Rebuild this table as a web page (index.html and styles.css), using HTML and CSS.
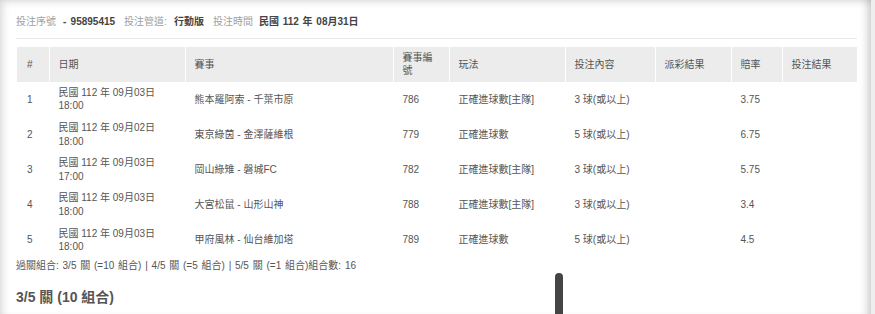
FILE: index.html
```html
<!DOCTYPE html>
<html lang="zh-Hant">
<head>
<meta charset="utf-8">
<title>投注明細</title>
<link rel="stylesheet" href="styles.css">
</head>
<body>
<div class="page">
  <div class="info"><span class="lbl">投注序號</span><b class="val v1">- 95895415</b><span class="lbl l2">投注管道:</span><b class="val v2">行動版</b><span class="lbl l3">投注時間</span><b class="val v3">民國 112 年 08月31日</b></div>
  <div class="sep"></div>
  <table class="bets">
    <colgroup>
      <col class="c1"><col class="c2"><col class="c3"><col class="c4"><col class="c5"><col class="c6"><col class="c7"><col class="c8"><col class="c9">
    </colgroup>
    <thead>
      <tr><th>#</th><th>日期</th><th>賽事</th><th>賽事編號</th><th>玩法</th><th>投注內容</th><th>派彩結果</th><th>賠率</th><th>投注結果</th></tr>
    </thead>
    <tbody>
      <tr><td>1</td><td>民國 112 年 09月03日<br>18:00</td><td>熊本羅阿索 - 千葉市原</td><td>786</td><td>正確進球數[主隊]</td><td>3 球(或以上)</td><td></td><td>3.75</td><td></td></tr>
      <tr><td>2</td><td>民國 112 年 09月02日<br>18:00</td><td>東京綠茵 - 金澤薩維根</td><td>779</td><td>正確進球數</td><td>5 球(或以上)</td><td></td><td>6.75</td><td></td></tr>
      <tr><td>3</td><td>民國 112 年 09月03日<br>17:00</td><td>岡山綠雉 - 磐城FC</td><td>782</td><td>正確進球數[主隊]</td><td>3 球(或以上)</td><td></td><td>5.75</td><td></td></tr>
      <tr><td>4</td><td>民國 112 年 09月03日<br>18:00</td><td>大宮松鼠 - 山形山神</td><td>788</td><td>正確進球數[主隊]</td><td>3 球(或以上)</td><td></td><td>3.4</td><td></td></tr>
      <tr><td>5</td><td>民國 112 年 09月03日<br>18:00</td><td>甲府風林 - 仙台維加塔</td><td>789</td><td>正確進球數</td><td>5 球(或以上)</td><td></td><td>4.5</td><td></td></tr>
    </tbody>
  </table>
  <p class="summary">過關組合: 3/5 關 (=10 組合) | 4/5 關 (=5 組合) | 5/5 關 (=1 組合)組合數: 16</p>
  <h3 class="combo">3/5 關 (10 組合)</h3>
  <div class="thumb"></div>
</div>
</body>
</html>
```

FILE: styles.css
```css
html, body {
  margin: 0;
  padding: 0;
  background: #eeeeee;
  height: 314px;
  overflow: hidden;
}

body {
  font-family: "Liberation Sans", Arial, "Noto Sans CJK TC", sans-serif;
  font-size: 10px;
  color: #555;
}

.page {
  position: relative;
  width: 871px;
  height: 314px;
  overflow: hidden;
  box-sizing: border-box;
  background: #fff;
  padding: 15px 14px 0 16px;
  box-shadow: inset 8px 7px 8px -6px rgba(0, 0, 0, 0.16),
              inset -9px 0 9px -6px rgba(0, 0, 0, 0.22);
}

.info {
  line-height: 14px;
  white-space: nowrap;
}

.lbl {
  color: #a0a0a0;
}

.val {
  color: #444;
  font-weight: bold;
}

.v1 {
  margin-left: 7px;
  word-spacing: 1.5px;
}

.l2 {
  margin-left: 9px;
}

.v2 {
  margin-left: 7px;
}

.l3 {
  margin-left: 9px;
}

.v3 {
  margin-left: 6px;
  word-spacing: 1px;
}

.sep {
  height: 1px;
  background: #eaeaea;
  margin: 9px 0 8px 0;
}

.bets {
  width: 840px;
  table-layout: fixed;
  border-collapse: collapse;
  margin-left: 1px;
}

.c1 { width: 32px; }
.c2 { width: 136px; }
.c3 { width: 208px; }
.c4 { width: 56px; }
.c5 { width: 116px; }
.c6 { width: 90px; }
.c7 { width: 76px; }
.c8 { width: 51px; }
.c9 { width: 75px; }

.bets th {
  background: #ececec;
  color: #555;
  font-weight: normal;
  text-align: left;
  line-height: 13.4px;
  padding: 4px 9px 4px 9px;
  border-left: 1px solid #fff;
  height: 26px;
}

.bets th:first-child {
  border-left: 0;
  padding-left: 10px;
}

.bets td {
  text-align: left;
  line-height: 13.6px;
  padding: 4px 9px;
  border-left: 1px solid transparent;
  vertical-align: middle;
}

.bets td:first-child {
  border-left: 0;
  padding-left: 10px;
}

.summary {
  margin: 1px 0 0 0;
  line-height: 14px;
  color: #555;
  word-spacing: 1px;
}

.combo {
  margin: 16px 0 0 0;
  font-size: 14px;
  line-height: 16px;
  font-weight: bold;
  color: #555;
}

.thumb {
  position: absolute;
  left: 555px;
  top: 273px;
  width: 8px;
  height: 41px;
  background: #444;
  border-radius: 4px 4px 0 0;
}
```
